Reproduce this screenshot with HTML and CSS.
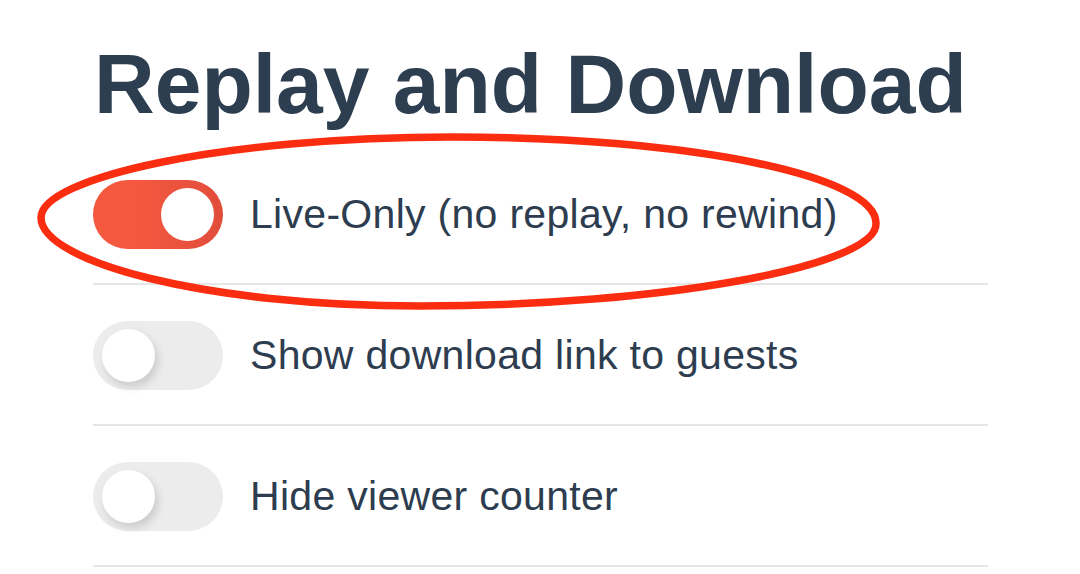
FILE: index.html
```html
<!DOCTYPE html>
<html lang="en">
<head>
    <meta charset="UTF-8">
    <meta name="viewport" content="width=device-width, initial-scale=1.0">
    <title>Replay and Download</title>
    <link rel="stylesheet" href="styles.css">
</head>
<body>
    <div class="container">
        <h1>Replay and Download</h1>
        <div class="settings">
            <div class="row">
                <span class="toggle on"><span class="knob"></span></span>
                <span class="label">Live-Only (no replay, no rewind)</span>
            </div>
            <div class="row">
                <span class="toggle"><span class="knob"></span></span>
                <span class="label">Show download link to guests</span>
            </div>
            <div class="row">
                <span class="toggle"><span class="knob"></span></span>
                <span class="label">Hide viewer counter</span>
            </div>
        </div>
    </div>

    <!-- hand drawn highlight round the first option -->
    <svg class="circle" width="1080" height="574" viewBox="0 0 1080 574">
        <path d="M876 224 C878 176 690 137 452 137 C222 137 40 178 41 218 C42 262 205 306 420 306 C662 306 876 266 876 224 Z"
              fill="none" stroke="#fa2d10" stroke-width="7.5" stroke-linejoin="round"/>
    </svg>
</body>
</html>
```

FILE: styles.css
```css
body {
    margin: 0;
    background: #fff;
    font-family: "Liberation Sans", Arial, sans-serif;
    color: #2c3e50;
}
.container {
    width: 895px;
    padding: 42px 0 0 93px;
}
h1 {
    margin: 0 0 18px 1px;
    font-size: 84px;
    line-height: 1;
    font-weight: bold;
    color: #2c3e50;
}
.row {
    display: flex;
    align-items: center;
    gap: 27px;
    padding: 36px 0 34px;
    border-bottom: 2px solid #e6e6e6;
}
.toggle {
    display: flex;
    align-items: center;
    flex: none;
    width: 130px;
    height: 69px;
    padding: 0 9px;
    box-sizing: border-box;
    border-radius: 35px;
    background: #ececec;
}
.toggle.on {
    justify-content: flex-end;
    background: linear-gradient(to right, #f4583f 35%, #e14d3b);
}
.knob {
    width: 53px;
    height: 53px;
    border-radius: 50%;
    background: #fff;
    box-shadow: 3px 5px 9px rgba(0, 0, 0, 0.14);
}
.toggle.on .knob {
    box-shadow: none;
}
.label {
    font-size: 41px;
    letter-spacing: 0.3px;
    color: #2d3d4f;
}
.circle {
    position: absolute;
    left: 0;
    top: 0;
    pointer-events: none;
}
```
